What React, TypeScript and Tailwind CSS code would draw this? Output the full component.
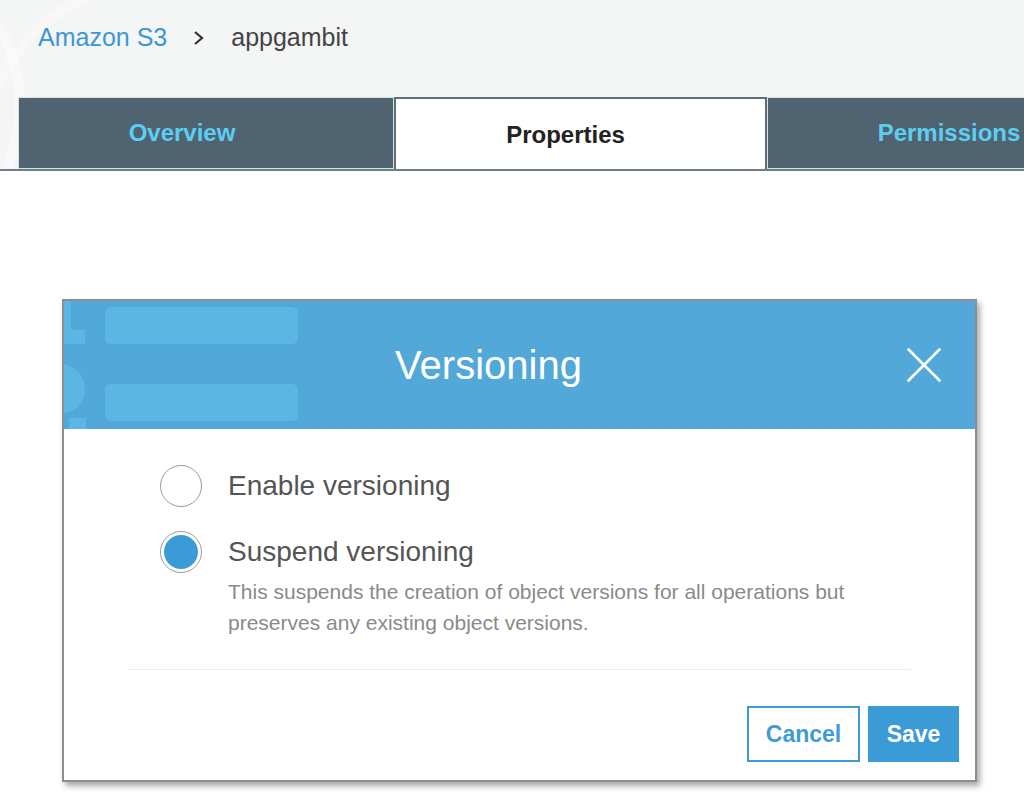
function Breadcrumb() {
  return (
    <div className="flex items-start h-[97px] pt-[25px] pl-[38px] text-[25px] leading-[24px]">
      <span className="text-[#3d97d3]">Amazon S3</span>
      <svg className="ml-[26px] mt-[5px]" width="12" height="16" viewBox="0 0 12 16">
        <polyline points="2,2 9,8 2,14" fill="none" stroke="#333" strokeWidth="2.2" />
      </svg>
      <span className="ml-[26px] text-[#444]">appgambit</span>
    </div>
  )
}

function Tabs() {
  return (
    <div className="flex h-[74px] pl-[18px] border-b-2 border-[#6d7f89] overflow-hidden">
      <div className="w-[376px] shrink-0 flex items-center justify-center pr-[48px] bg-[#4f6470] border border-[#d9dfe2] text-[24px] font-bold text-[#5dcdf1]">
        Overview
      </div>
      <div className="w-[373px] shrink-0 -mb-[2px] flex items-center justify-center pr-[30px] bg-white border-2 border-b-0 border-[#5c6f7a] text-[24px] font-bold text-[#222]">
        Properties
      </div>
      <div className="w-[364px] shrink-0 flex items-center justify-center bg-[#4f6470] border border-[#d9dfe2] text-[24px] font-bold text-[#5dcdf1]">
        Permissions
      </div>
    </div>
  )
}

function HeaderDecor() {
  return (
    <svg className="absolute left-0 top-0" width="240" height="128" viewBox="0 0 240 128">
      <g fill="#5cb6e3">
        <rect x="41" y="6" width="193" height="37" rx="6" />
        <rect x="41" y="83" width="193" height="37" rx="6" />
        <rect x="0" y="0" width="7" height="43" />
        <rect x="0" y="29" width="21" height="14" />
        <circle cx="-4" cy="88" r="25" />
        <rect x="5" y="117" width="17" height="11" />
      </g>
    </svg>
  )
}

function CloseIcon() {
  return (
    <svg className="relative mr-[34px] shrink-0" width="34" height="34" viewBox="0 0 34 34">
      <path d="M1.5 1.5 L32.5 32.5 M32.5 1.5 L1.5 32.5" stroke="#fff" strokeWidth="2.6" strokeLinecap="round" />
    </svg>
  )
}

function Radio({ checked }: { checked?: boolean }) {
  return (
    <div className="w-[42px] h-[42px] shrink-0 rounded-full border-[1.5px] border-[#9b9b9b] bg-white flex items-center justify-center">
      {checked && <div className="w-[34px] h-[34px] rounded-full bg-[#3a9bd7]" />}
    </div>
  )
}

export default function App() {
  return (
    <div className="relative w-[1024px] h-[798px] overflow-hidden bg-white font-['Liberation_Sans',Arial,sans-serif]">
      <div className="relative bg-[#f4f5f5]">
        <svg className="absolute left-0 top-0" width="160" height="170" viewBox="0 0 160 170">
          <circle cx="-135" cy="105" r="155" fill="none" stroke="#ffffff" strokeOpacity="0.45" strokeWidth="10" />
          <circle cx="150" cy="150" r="165" fill="none" stroke="#ffffff" strokeOpacity="0.35" strokeWidth="10" />
        </svg>
        <div className="relative">
          <Breadcrumb />
          <Tabs />
        </div>
      </div>

      <div className="mt-[128px] ml-[62px] w-[915px] border-2 border-[#8e8e8e] bg-white shadow-[3px_4px_6px_rgba(0,0,0,0.35)]">
        <div className="relative h-[128px] bg-[#52a8d8] flex items-center">
          <HeaderDecor />
          <div className="relative flex-1 pl-[6px] text-center text-[40px] text-white">Versioning</div>
          <CloseIcon />
        </div>

        <div className="pt-[36px] pl-[96px]">
          <div className="flex items-center">
            <Radio />
            <span className="ml-[26px] text-[28px] leading-[42px] text-[#555]">Enable versioning</span>
          </div>
          <div className="flex items-start mt-[24px]">
            <Radio checked />
            <div className="ml-[26px]">
              <div className="text-[28px] leading-[42px] text-[#555]">Suspend versioning</div>
              <p className="mt-[3px] text-[21px] leading-[31px] text-[#8a8a8a]">
                This suspends the creation of object versions for all operations but
                <br />
                preserves any existing object versions.
              </p>
            </div>
          </div>
        </div>

        <div className="mt-[31px] mx-[64px] h-px bg-[#ececec]" />

        <div className="flex justify-end gap-[8px] pt-[36px] pb-[18px] pr-[16px]">
          <button className="w-[113px] h-[56px] border-2 border-[#3f9bd5] bg-white text-[23px] font-bold text-[#3f9bd5]">
            Cancel
          </button>
          <button className="w-[91px] h-[56px] bg-[#3a9bd7] text-[23px] font-bold text-white">
            Save
          </button>
        </div>
      </div>
    </div>
  )
}
